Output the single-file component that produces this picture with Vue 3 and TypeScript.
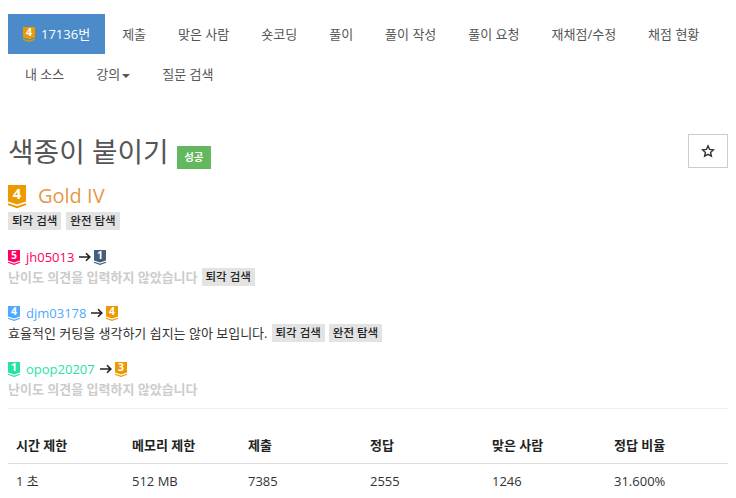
<script setup lang="ts">
interface Opinion {
  user: string
  color: string
  from: { n: number; c: string }
  to: { n: number; c: string }
  text: string
  empty: boolean
  tags: string[]
}

const navItems = ['제출', '맞은 사람', '숏코딩', '풀이', '풀이 작성', '풀이 요청', '재채점/수정', '채점 현황', '내 소스', '강의', '질문 검색']

const gold = '#ec9a00'

const opinions: Opinion[] = [
  { user: 'jh05013', color: '#ff0062', from: { n: 5, c: '#ff0062' }, to: { n: 1, c: '#435f7a' }, text: '난이도 의견을 입력하지 않았습니다', empty: true, tags: ['퇴각 검색'] },
  { user: 'djm03178', color: '#51a8ff', from: { n: 4, c: '#51a8ff' }, to: { n: 4, c: gold }, text: '효율적인 커팅을 생각하기 쉽지는 않아 보입니다.', empty: false, tags: ['퇴각 검색', '완전 탐색'] },
  { user: 'opop20207', color: '#27e2a4', from: { n: 1, c: '#27e2a4' }, to: { n: 3, c: gold }, text: '난이도 의견을 입력하지 않았습니다', empty: true, tags: [] },
]

const headers = ['시간 제한', '메모리 제한', '제출', '정답', '맞은 사람', '정답 비율']
const values = ['1 초', '512 MB', '7385', '2555', '1246', '31.600%']
</script>

<template>
  <div class="page">
    <ul class="nav">
      <li class="active">
        <svg class="tier" width="12" height="15" viewBox="0 0 12 15">
          <path :fill="gold" d="M0 0H12V10.6L6 12.6L0 10.6Z" />
          <path fill="none" :stroke="gold" stroke-width="1.1" d="M0 12.2L6 14.3L12 12.2" />
          <text x="6" y="9.2" text-anchor="middle" class="tier-num">4</text>
        </svg>
        <span class="problem-no">17136번</span>
      </li>
      <li v-for="item in navItems" :key="item">
        {{ item }}<span v-if="item === '강의'" class="caret"></span>
      </li>
    </ul>

    <div class="title-row">
      <h1>색종이 붙이기</h1>
      <span class="badge">성공</span>
      <button class="star" type="button">
        <svg width="14" height="14" viewBox="0 0 24 24">
          <path fill="none" stroke="#333" stroke-width="2.4" d="M12 3.2L14.7 9.3L21.3 10L16.4 14.4L17.8 20.9L12 17.6L6.2 20.9L7.6 14.4L2.7 10L9.3 9.3Z" />
        </svg>
      </button>
    </div>

    <div class="level">
      <svg class="tier" width="18" height="24" viewBox="0 0 18 24">
        <path :fill="gold" d="M0 0H18V16.5L9 19.5L0 16.5Z" />
        <path fill="none" :stroke="gold" stroke-width="1.8" d="M0 19.2L9 22.2L18 19.2" />
        <text x="9" y="14" text-anchor="middle" class="level-num">4</text>
      </svg>
      <span class="level-name">Gold IV</span>
    </div>
    <div class="tags">
      <span class="tag">퇴각 검색</span>
      <span class="tag">완전 탐색</span>
    </div>

    <div v-for="op in opinions" :key="op.user" class="opinion">
      <div class="who">
        <svg class="tier" width="12" height="15" viewBox="0 0 12 15">
          <path :fill="op.from.c" d="M0 0H12V10.6L6 12.6L0 10.6Z" />
          <path fill="none" :stroke="op.from.c" stroke-width="1.1" d="M0 12.2L6 14.3L12 12.2" />
          <text x="6" y="9.2" text-anchor="middle" class="tier-num">{{ op.from.n }}</text>
        </svg>
        <span class="user" :style="{ color: op.color }">{{ op.user }}</span>
        <svg class="arrow" width="12" height="10" viewBox="0 0 12 10">
          <path fill="none" stroke="#222" stroke-width="1.6" d="M0 5H10.5M7 1.2L10.8 5L7 8.8" />
        </svg>
        <svg class="tier" width="12" height="15" viewBox="0 0 12 15">
          <path :fill="op.to.c" d="M0 0H12V10.6L6 12.6L0 10.6Z" />
          <path fill="none" :stroke="op.to.c" stroke-width="1.1" d="M0 12.2L6 14.3L12 12.2" />
          <text x="6" y="9.2" text-anchor="middle" class="tier-num">{{ op.to.n }}</text>
        </svg>
      </div>
      <div class="comment">
        <span :class="{ muted: op.empty }">{{ op.text }}</span>
        <span v-for="t in op.tags" :key="t" class="tag">{{ t }}</span>
      </div>
    </div>

    <hr />

    <table>
      <colgroup>
        <col class="narrow" />
        <col class="narrow" />
        <col /><col /><col /><col />
      </colgroup>
      <thead>
        <tr><th v-for="h in headers" :key="h">{{ h }}</th></tr>
      </thead>
      <tbody>
        <tr><td v-for="v in values" :key="v">{{ v }}</td></tr>
      </tbody>
    </table>
  </div>
</template>

<style>
html, body {
  overflow: hidden;
}
</style>

<style scoped>
.page {
  width: 720px;
  padding: 14px 8px 0;
  font-family: "Open Sans", "Noto Sans CJK KR", sans-serif;
  font-size: 13px;
  line-height: 20px;
  color: #333;
}
.nav {
  display: flex;
  flex-wrap: wrap;
  list-style: none;
  margin: 0;
  padding: 0;
}
.nav li {
  padding: 10px 15px;
  margin-left: 2px;
  color: #555;
  white-space: nowrap;
}
.nav li.active {
  margin-left: 0;
  background: #4b8bc9;
  color: #fff;
}
.problem-no {
  margin-left: 6px;
}
.tier {
  vertical-align: -3px;
  overflow: visible;
  flex-shrink: 0;
}
.tier-num {
  font: 700 10.5px "Open Sans", sans-serif;
  fill: #fff;
}
.caret {
  display: inline-block;
  margin-left: 2px;
  vertical-align: middle;
  border-top: 4px solid #555;
  border-left: 4px solid transparent;
  border-right: 4px solid transparent;
}
.title-row {
  display: flex;
  align-items: center;
  margin-top: 37px;
  height: 40px;
}
h1 {
  margin: 0;
  font-size: 27.8px;
  line-height: 40px;
  font-weight: 400;
  color: #555;
}
.badge {
  margin-left: 8px;
  margin-top: 12px;
  padding: 0 7.5px;
  height: 23px;
  line-height: 23px;
  font-size: 10.5px;
  font-weight: 700;
  color: #fff;
  background: #62b75f;
}
.star {
  margin-left: auto;
  width: 40px;
  height: 34px;
  padding: 0;
  display: flex;
  align-items: center;
  justify-content: center;
  background: #fff;
  border: 1px solid #ccc;
}
.level {
  display: flex;
  align-items: flex-start;
  margin-top: 14px;
  height: 25px;
}
.level-name {
  margin-left: 12px;
  font-size: 20px;
  line-height: 21px;
  color: #e4984a;
}
.level-num {
  font: 700 15px "Open Sans", sans-serif;
  fill: #fff;
}
.tags {
  display: flex;
  gap: 5px;
  margin-top: 2px;
  margin-bottom: 17px;
}
.tag {
  display: inline-block;
  padding: 0 4px;
  height: 18px;
  line-height: 18px;
  font-size: 11.5px;
  font-weight: 500;
  color: #222;
  background: #e3e3e3;
}
.opinion + .opinion {
  margin-top: 16px;
}
.who {
  display: flex;
  align-items: center;
  height: 20px;
}
.user {
  margin-left: 6px;
}
.arrow {
  margin: 0 3px 0 5px;
}
.comment {
  display: flex;
  align-items: center;
  gap: 4px;
  height: 20px;
  font-weight: 400;
}
.muted {
  font-weight: 700;
  color: #ccc;
}
hr {
  margin: 9px 0 0;
  border: 0;
  border-top: 1px solid #eee;
}
table {
  width: 100%;
  margin-top: 18px;
  border-collapse: collapse;
  table-layout: fixed;
}
col.narrow {
  width: 116px;
}
th {
  padding: 8px;
  text-align: left;
  font-weight: 700;
  color: #222;
  border-bottom: 1px solid #ddd;
}
td {
  padding: 7px 8px;
  text-align: left;
}
</style>
